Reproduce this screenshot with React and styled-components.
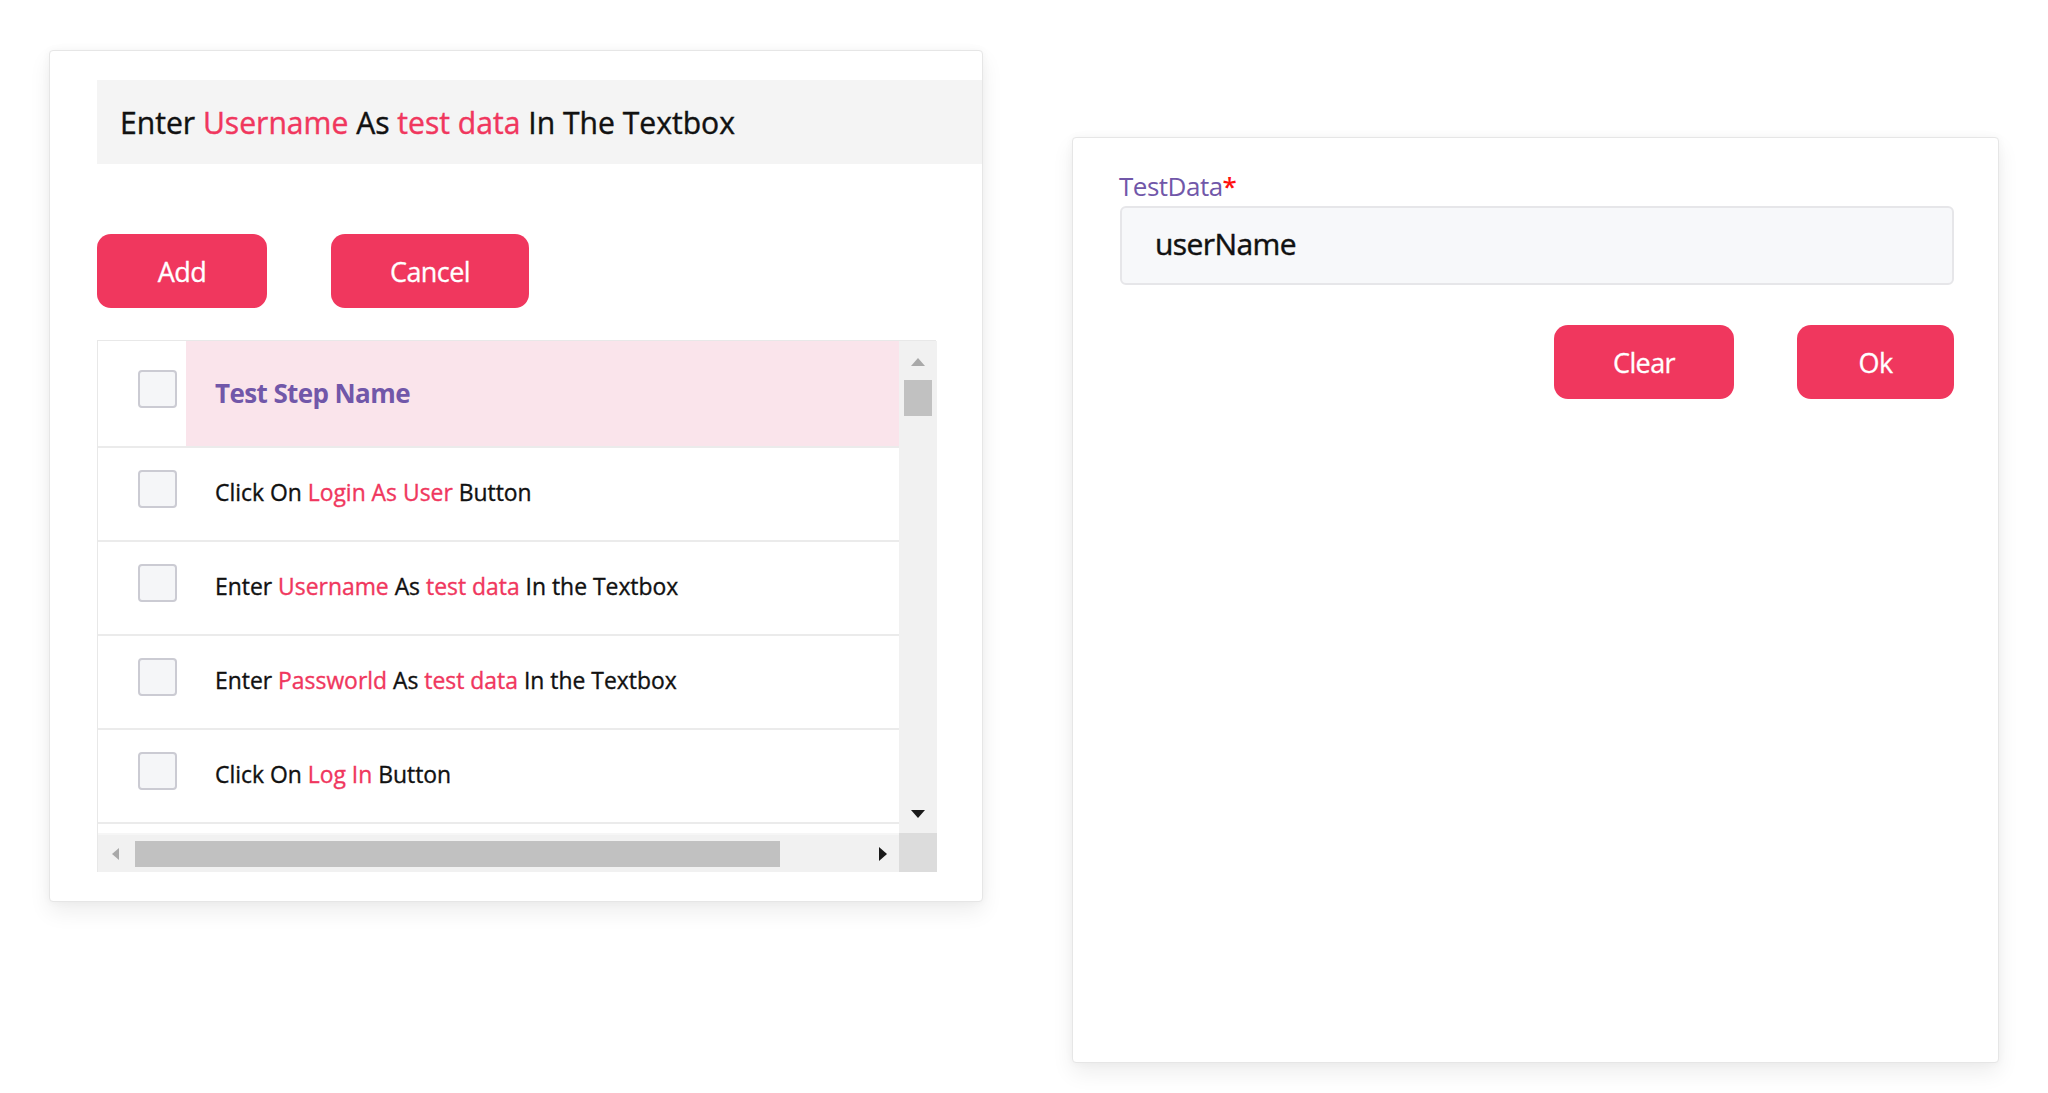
import React from 'react';
import styled, { createGlobalStyle } from 'styled-components';

const accent = '#f0375e';
const purple = '#7157a9';

const GlobalStyle = createGlobalStyle`
  html, body {
    margin: 0;
    padding: 0;
    background: #ffffff;
  }
  body {
    font-family: 'Open Sans', 'Noto Sans', sans-serif;
    color: #111111;
  }
  * {
    box-sizing: border-box;
  }
`;

const Page = styled.div`
  display: flex;
  align-items: flex-start;
  gap: 89px;
  padding: 50px 0 0 49px;
  width: 2048px;
  height: 1093px;
  overflow: hidden;
`;

const Card = styled.section`
  background: #ffffff;
  border: 1px solid #e6e6e6;
  border-radius: 4px;
  box-shadow: 0 10px 22px rgba(0, 0, 0, 0.07), 0 0 8px rgba(0, 0, 0, 0.04);
`;

const StepCard = styled(Card)`
  width: 934px;
  height: 852px;
  padding: 29px 0 0 47px;
`;

const DataCard = styled(Card)`
  width: 927px;
  height: 926px;
  margin-top: 87px;
  padding: 33px 44px 0 47px;
`;

const StepTitle = styled.h1`
  display: flex;
  align-items: center;
  height: 84px;
  margin: 0;
  padding-left: 23px;
  background: #f4f4f4;
  font-size: 30.1px;
  font-weight: 400;
  -webkit-text-stroke: 0.4px currentColor;
  color: #111111;
  white-space: pre;
`;

const Hl = styled.span`
  color: ${accent};
`;

const ButtonRow = styled.div`
  display: flex;
  gap: ${p => p.$gap}px;
  justify-content: ${p => (p.$end ? 'flex-end' : 'flex-start')};
  margin-top: ${p => p.$top}px;
`;

const Button = styled.button`
  width: ${p => p.$w}px;
  height: 74px;
  border: none;
  border-radius: 14px;
  background: ${accent};
  color: #ffffff;
  font-family: 'Open Sans', sans-serif;
  font-size: 27px;
  font-weight: 400;
  -webkit-text-stroke: 0.3px currentColor;
  letter-spacing: -0.6px;
  cursor: pointer;
`;

const Table = styled.div`
  display: grid;
  grid-template-columns: 801px 38px;
  grid-template-rows: 492px 39px;
  width: 839px;
  margin-top: 32px;
  border-top: 1px solid #e8e8e8;
  border-left: 1px solid #e8e8e8;
`;

const Body = styled.div`
  overflow: hidden;
  background: #ffffff;
`;

const Row = styled.div`
  display: grid;
  grid-template-columns: 88px 1fr;
  height: ${p => (p.$head ? 107 : 94)}px;
  border-bottom: 2px solid #ebebeb;
  background: #ffffff;
`;

const CheckCell = styled.div`
  display: flex;
  align-items: center;
  padding-left: 40px;
  padding-bottom: 10px;
`;

const Checkbox = styled.span`
  display: block;
  width: 39px;
  height: 38px;
  border: 2px solid #cbcbd3;
  border-radius: 4px;
  background: #f5f6f8;
`;

const NameCell = styled.div`
  display: flex;
  align-items: center;
  padding-left: 29px;
  padding-bottom: ${p => (p.$head ? 2 : 4)}px;
  background: ${p => (p.$head ? '#fae4eb' : 'transparent')};
  color: ${p => (p.$head ? purple : '#111111')};
  font-size: ${p => (p.$head ? 26 : 22.9)}px;
  font-weight: ${p => (p.$head ? 700 : 400)};
  -webkit-text-stroke: ${p => (p.$head ? '0' : '0.35px')} currentColor;
  letter-spacing: ${p => (p.$head ? '-0.6px' : '0')};
  white-space: pre;
`;

const VScroll = styled.div`
  display: flex;
  flex-direction: column;
  align-items: center;
  padding: 17px 0 15px;
  background: #f1f1f1;
`;

const HScroll = styled.div`
  display: flex;
  align-items: center;
  padding: 0 12px 0 14px;
  background: #f1f1f1;
  border-top: 2px solid #f6f6f6;
`;

const Corner = styled.div`
  background: #dcdcdc;
`;

const Arrow = styled.span`
  display: block;
  width: 0;
  height: 0;
  border-style: solid;
  ${p =>
    p.$dir === 'up' &&
    `border-width: 0 7px 8px 7px; border-color: transparent transparent ${p.$c} transparent;`}
  ${p =>
    p.$dir === 'down' &&
    `border-width: 8px 7px 0 7px; border-color: ${p.$c} transparent transparent transparent;`}
  ${p =>
    p.$dir === 'left' &&
    `border-width: 6px 7px 6px 0; border-color: transparent ${p.$c} transparent transparent;`}
  ${p =>
    p.$dir === 'right' &&
    `border-width: 7px 0 7px 8px; border-color: transparent transparent transparent ${p.$c};`}
`;

const VThumb = styled.div`
  width: 28px;
  height: 36px;
  margin-top: 14px;
  background: #c1c1c1;
`;

const HThumb = styled.div`
  width: 645px;
  height: 26px;
  margin-left: 16px;
  background: #c1c1c1;
`;

const Spacer = styled.div`
  flex: 1;
`;

const Label = styled.label`
  display: block;
  margin-left: -1px;
  font-size: 26px;
  line-height: 31px;
  color: ${purple};
  letter-spacing: -0.5px;
`;

const Required = styled.span`
  color: #ff1010;
  font-weight: 600;
`;

const Input = styled.input`
  display: block;
  width: 100%;
  height: 79px;
  margin-top: 4px;
  padding: 0 0 4px 33px;
  border: 2px solid #e6e6e9;
  border-radius: 6px;
  background: #f7f8fa;
  font-family: 'Open Sans', sans-serif;
  font-size: 30px;
  font-weight: 400;
  -webkit-text-stroke: 0.45px currentColor;
  letter-spacing: -0.6px;
  color: #111111;
  outline: none;
`;

const steps = [
  [['Click On '], ['Login As User', true], [' Button']],
  [['Enter '], ['Username', true], [' As '], ['test data', true], [' In the Textbox']],
  [['Enter '], ['Passworld', true], [' As '], ['test data', true], [' In the Textbox']],
  [['Click On '], ['Log In', true], [' Button']],
];

const Parts = ({ parts }) => (
  <span>
    {parts.map(([text, hl], i) => (hl ? <Hl key={i}>{text}</Hl> : <span key={i}>{text}</span>))}
  </span>
);

export default function App() {
  return (
    <>
      <GlobalStyle />
      <Page>
        <StepCard>
          <StepTitle>
            <span>
              Enter <Hl>Username</Hl> As <Hl>test data</Hl> In The Textbox
            </span>
          </StepTitle>
          <ButtonRow $gap={64} $top={70}>
            <Button $w={170}>Add</Button>
            <Button $w={198}>Cancel</Button>
          </ButtonRow>
          <Table>
            <Body>
              <Row $head>
                <CheckCell>
                  <Checkbox />
                </CheckCell>
                <NameCell $head>Test Step Name</NameCell>
              </Row>
              {steps.map((parts, i) => (
                <Row key={i}>
                  <CheckCell>
                    <Checkbox />
                  </CheckCell>
                  <NameCell>
                    <Parts parts={parts} />
                  </NameCell>
                </Row>
              ))}
            </Body>
            <VScroll>
              <Arrow $dir="up" $c="#a9a9a9" />
              <VThumb />
              <Spacer />
              <Arrow $dir="down" $c="#1a1a1a" />
            </VScroll>
            <HScroll>
              <Arrow $dir="left" $c="#a9a9a9" />
              <HThumb />
              <Spacer />
              <Arrow $dir="right" $c="#1a1a1a" />
            </HScroll>
            <Corner />
          </Table>
        </StepCard>

        <DataCard>
          <Label>
            TestData<Required>*</Required>
          </Label>
          <Input defaultValue="userName" />
          <ButtonRow $gap={63} $top={40} $end>
            <Button $w={180}>Clear</Button>
            <Button $w={157}>Ok</Button>
          </ButtonRow>
        </DataCard>
      </Page>
    </>
  );
}
